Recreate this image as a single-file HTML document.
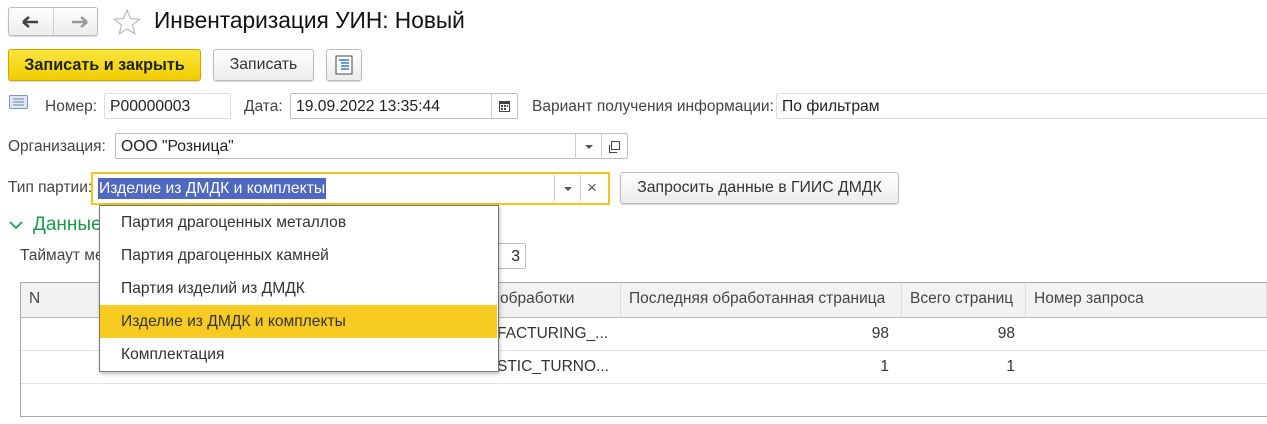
<!DOCTYPE html>
<html><head><meta charset="utf-8"><style>
*{box-sizing:border-box}
body{margin:0;width:1267px;height:424px;background:#fff;font-family:"Liberation Sans",Arial,sans-serif;font-size:15.5px;color:#333;position:relative;overflow:hidden}
.a{position:absolute}
.inp{position:absolute;border:1px solid #bbb;border-radius:2px;background:#fff;height:26px;line-height:25px;padding-left:5px;color:#222;font-size:15.7px}
.lbl{position:absolute;color:#444;font-size:15.5px}
.btn{position:absolute;border:1px solid #bbb;border-radius:3px;background:linear-gradient(#fff,#ececec);text-align:center;color:#333;box-shadow:0 1px 1px rgba(0,0,0,.15)}
.th{position:absolute;top:283px;height:34px;line-height:32px;background:#f2f2f2;border-right:1px solid #ddd;padding-left:8px;color:#444;white-space:nowrap;overflow:hidden}
.hl{position:absolute;left:21px;width:1246px;height:1px;background:#e2e2e2}
.num{position:absolute;text-align:right;color:#333}
.it{position:absolute;left:100px;width:397px;height:33px;line-height:33px;padding-left:21px;color:#333;font-size:15.6px}
</style></head><body>
<div class="btn" style="left:8px;top:7px;width:90px;height:29px;border-radius:3px"></div>
<div class="a" style="left:53px;top:9px;width:1px;height:25px;background:#ccc"></div>
<svg class="a" style="left:20px;top:14px" width="70" height="16"><path d="M3 8h15M3 8l6-5M3 8l6 5" stroke="#444" stroke-width="2.5" fill="none"/><path d="M52 8h15M67 8l-6-5M67 8l-6 5" stroke="#999" stroke-width="2.5" fill="none"/></svg>
<svg class="a" style="left:112px;top:8px" width="30" height="28"><path d="M15 2l3.5 8.5 9 .7-7 5.8 2.2 8.8L15 21l-7.7 4.8 2.2-8.8-7-5.8 9-.7z" fill="none" stroke="#bbb" stroke-width="1.2"/></svg>
<div class="a" style="left:154px;top:7px;font-size:22.7px;color:#111">Инвентаризация УИН: Новый</div>
<div class="btn" style="left:8px;top:49px;width:193px;height:32px;line-height:30px;background:linear-gradient(#fbe63a,#f0cd00);border-color:#c9a800;font-weight:bold;color:#222;font-size:16.2px">Записать и закрыть</div>
<div class="btn" style="left:213px;top:49px;width:101px;height:32px;line-height:30px;font-size:15.8px">Записать</div>
<div class="btn" style="left:326px;top:49px;width:36px;height:32px"></div>
<svg class="a" style="left:335px;top:55px" width="18" height="20"><rect x="1" y="1" width="16" height="18" fill="#fff" stroke="#444"/><path d="M4 5h10M6 8h8M6 11h8M6 14h8" stroke="#3a7abf" stroke-width="1.5"/></svg>
<svg class="a" style="left:9px;top:95px" width="20" height="15"><rect x="0.5" y="0.5" width="18" height="13" rx="1" fill="#dfe8f2" stroke="#7d9ab8"/><path d="M4 4h11M4 7h11M4 10h11" stroke="#6c88a6"/></svg>
<div class="lbl" style="left:45px;top:98px">Номер:</div>
<div class="inp" style="left:104px;top:93px;width:127px;border-color:#ddd">P00000003</div>
<div class="lbl" style="left:244px;top:98px">Дата:</div>
<div class="inp" style="left:290px;top:93px;width:228px">19.09.2022 13:35:44</div>
<div class="a" style="left:491px;top:94px;width:1px;height:25px;background:#ccc"></div>
<svg class="a" style="left:498px;top:99px" width="13" height="14"><rect x="1" y="2" width="11" height="11" fill="#444"/><rect x="2" y="5" width="9" height="7" fill="#fff"/><path d="M3 6h2v2H3zM6 6h2v2H6zM9 6h1v2H9zM3 9h2v2H3zM6 9h2v2H6z" fill="#444"/></svg>
<div class="lbl" style="left:532px;top:98px">Вариант получения информации:</div>
<div class="inp" style="left:776px;top:93px;width:500px;border-color:#ddd">По фильтрам</div>
<div class="lbl" style="left:8px;top:138px">Организация:</div>
<div class="inp" style="left:115px;top:133px;width:513px">ООО "Розница"</div>
<div class="a" style="left:575px;top:134px;width:1px;height:25px;background:#ccc"></div>
<div class="a" style="left:601px;top:134px;width:1px;height:25px;background:#ccc"></div>
<div class="a" style="left:585px;top:145px;border:4px solid transparent;border-top:4px solid #555;border-bottom:0"></div>
<svg class="a" style="left:607px;top:140px" width="14" height="14"><rect x="4.5" y="1.5" width="8" height="8" fill="none" stroke="#444"/><path d="M2.5 5v7.5h7.5" fill="none" stroke="#444"/></svg>
<div class="lbl" style="left:8px;top:179px">Тип партии:</div>
<div class="a" style="left:91px;top:172px;width:519px;height:33px;border:2px solid #f5c518;background:#fff"></div>
<div class="a" style="left:98px;top:178px;height:21px;line-height:21px;background:#4f68c0;color:#fff;font-size:15.7px;padding:0 1px">Изделие из ДМДК и комплекты</div>
<div class="a" style="left:554px;top:175px;width:1px;height:26px;background:#ccc"></div>
<div class="a" style="left:580px;top:175px;width:1px;height:26px;background:#ccc"></div>
<div class="a" style="left:564px;top:187px;border:4px solid transparent;border-top:4px solid #555;border-bottom:0"></div>
<div class="a" style="left:587px;top:178px;color:#555;font-size:17px">×</div>
<div class="btn" style="left:620px;top:172px;width:279px;height:32px;line-height:30px;font-size:15.8px">Запросить данные в ГИИС ДМДК</div>
<svg class="a" style="left:9px;top:221px" width="14" height="10"><path d="M1 1l6 6 6-6" fill="none" stroke="#1a9a4a" stroke-width="1.6"/></svg>
<div class="a" style="left:33px;top:214px;font-size:19px;color:#1a9a4a">Данные</div>
<div class="lbl" style="left:20px;top:247px">Таймаут ме</div>
<div class="inp" style="left:490px;top:243px;width:36px;text-align:right;padding-right:5px">3</div>
<div class="a" style="left:20px;top:282px;width:1250px;height:135px;border:1px solid #aaa;border-right:none"></div>
<div class="th" style="left:21px;width:600px">N</div>
<div class="th" style="left:492px;width:129px">обработки</div>
<div class="th" style="left:621px;width:281px">Последняя обработанная страница</div>
<div class="th" style="left:902px;width:124px">Всего страниц</div>
<div class="th" style="left:1026px;width:241px">Номер запроса</div>
<div class="a" style="left:21px;top:317px;width:1246px;height:1px;background:#bbb"></div>
<div class="hl" style="top:350px"></div><div class="hl" style="top:383px"></div>
<div class="a" style="left:497px;top:325px">FACTURING_...</div>
<div class="a" style="left:497px;top:358px">STIC_TURNO...</div>
<div class="num" style="left:800px;top:325px;width:89px">98</div>
<div class="num" style="left:930px;top:325px;width:85px">98</div>
<div class="num" style="left:800px;top:358px;width:89px">1</div>
<div class="num" style="left:930px;top:358px;width:85px">1</div>
<div class="a" style="left:99px;top:205px;width:400px;height:167px;border:1px solid #777;background:#fff;box-shadow:1px 2px 4px rgba(0,0,0,.25)"></div>
<div class="it" style="top:206px">Партия драгоценных металлов</div>
<div class="it" style="top:239px">Партия драгоценных камней</div>
<div class="it" style="top:272px">Партия изделий из ДМДК</div>
<div class="it" style="top:305px;background:#f8cb22">Изделие из ДМДК и комплекты</div>
<div class="it" style="top:338px">Комплектация</div>
</body></html>
